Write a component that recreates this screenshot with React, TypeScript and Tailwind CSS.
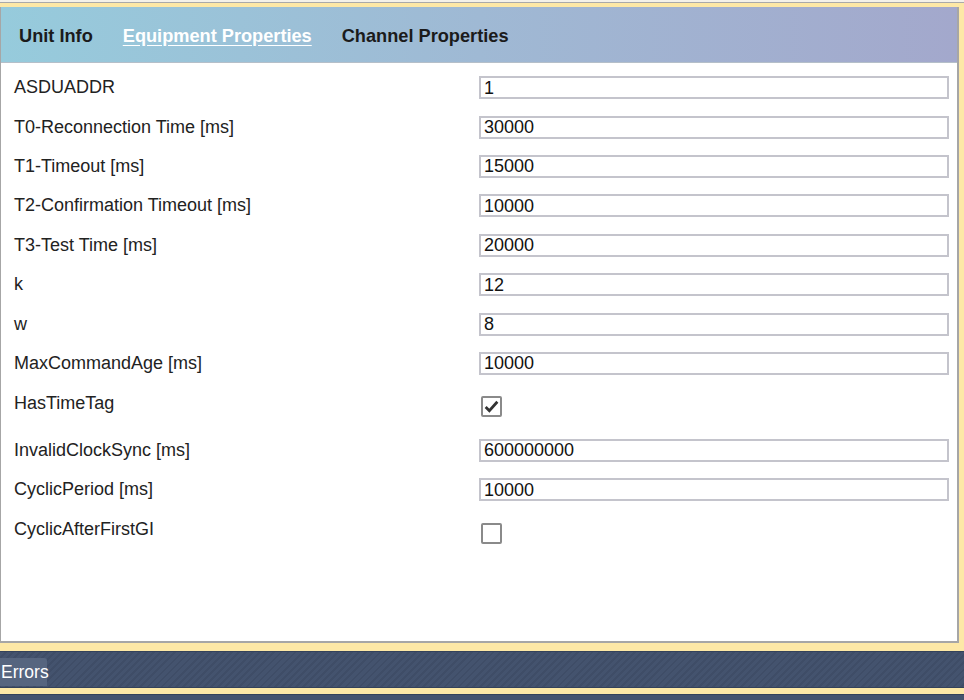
import React from 'react';

type Row = { label: string; value?: string; checked?: boolean };

const rows: Row[] = [
  { label: 'ASDUADDR', value: '1' },
  { label: 'T0-Reconnection Time [ms]', value: '30000' },
  { label: 'T1-Timeout [ms]', value: '15000' },
  { label: 'T2-Confirmation Timeout [ms]', value: '10000' },
  { label: 'T3-Test Time [ms]', value: '20000' },
  { label: 'k', value: '12' },
  { label: 'w', value: '8' },
  { label: 'MaxCommandAge [ms]', value: '10000' },
  { label: 'HasTimeTag', checked: true },
  { label: 'InvalidClockSync [ms]', value: '600000000' },
  { label: 'CyclicPeriod [ms]', value: '10000' },
  { label: 'CyclicAfterFirstGI', checked: false },
];

const Checkbox = ({ checked }: { checked: boolean }) => (
  <div className="w-[21px] h-[21px] border-2 border-[#8a8a8a] rounded-[2px] bg-white flex items-center justify-center">
    {checked && (
      <svg width="17" height="17" viewBox="0 0 16 16">
        <path d="M2.5 8.5 L6 12 L13.5 3.5" fill="none" stroke="#333" strokeWidth="2.6" />
      </svg>
    )}
  </div>
);

export default function App() {
  return (
    <div className="w-[964px] h-[700px] overflow-hidden bg-[#fde8a6] flex flex-col font-['Liberation_Sans',Arial,sans-serif]">
      <div className="h-[3px] bg-[#f4f1e8] border-b border-[#a9a9a9]" />
      <div className="h-[4px]" />

      {/* Properties panel */}
      <div className="w-[959px] h-[636px] flex flex-col border border-t-0 border-[#a6a6a6] border-r-2 border-b-2 bg-white">
        <div className="h-[56px] flex items-center gap-[30px] pl-[18px] pt-[4px] border-b border-[#b5bfc9] bg-gradient-to-r from-[#96cbdc] via-[#9fb9d4] to-[#a3a8cc] text-[18.2px] font-bold">
          <span className="text-[#1b1b1b]">Unit Info</span>
          <span className="text-white underline underline-offset-[3px]">Equipment Properties</span>
          <span className="text-[#1b1b1b]">Channel Properties</span>
        </div>

        <div className="pt-[5px] text-[18px] text-[#222]">
          {rows.map((row) =>
            row.value !== undefined ? (
              <div key={row.label} className="h-[39.4px] flex items-center">
                <div className="w-[478px] pl-[13px]">{row.label}</div>
                <div className="w-[470px] h-[23px] border-2 border-[#c4c4cc] flex items-center pl-[3px] leading-none text-[18px] text-[#111]">
                  {row.value}
                </div>
              </div>
            ) : (
              <div key={row.label} className="h-[47.6px] flex items-center">
                <div className="w-[480px] pl-[13px] -mt-[7px]">{row.label}</div>
                <Checkbox checked={!!row.checked} />
              </div>
            )
          )}
        </div>
      </div>

      <div className="h-[8px]" />

      {/* Bottom dock */}
      <div className="h-[37px] border-y border-[#34425a] bg-[#44536e] bg-[repeating-linear-gradient(135deg,#44536e_0px,#44536e_3px,#3f4d67_3px,#3f4d67_5px)] flex items-end">
        <div className="h-[28px] w-[47px] rounded-tr-[3px] bg-[#56657f] flex items-center pl-[1px] mb-[1px] text-white text-[17.5px] whitespace-nowrap">
          Errors
        </div>
      </div>
      <div className="h-[6px]" />
      <div className="flex-1 bg-[#44536e] border-t border-[#34425a]" />
    </div>
  );
}
